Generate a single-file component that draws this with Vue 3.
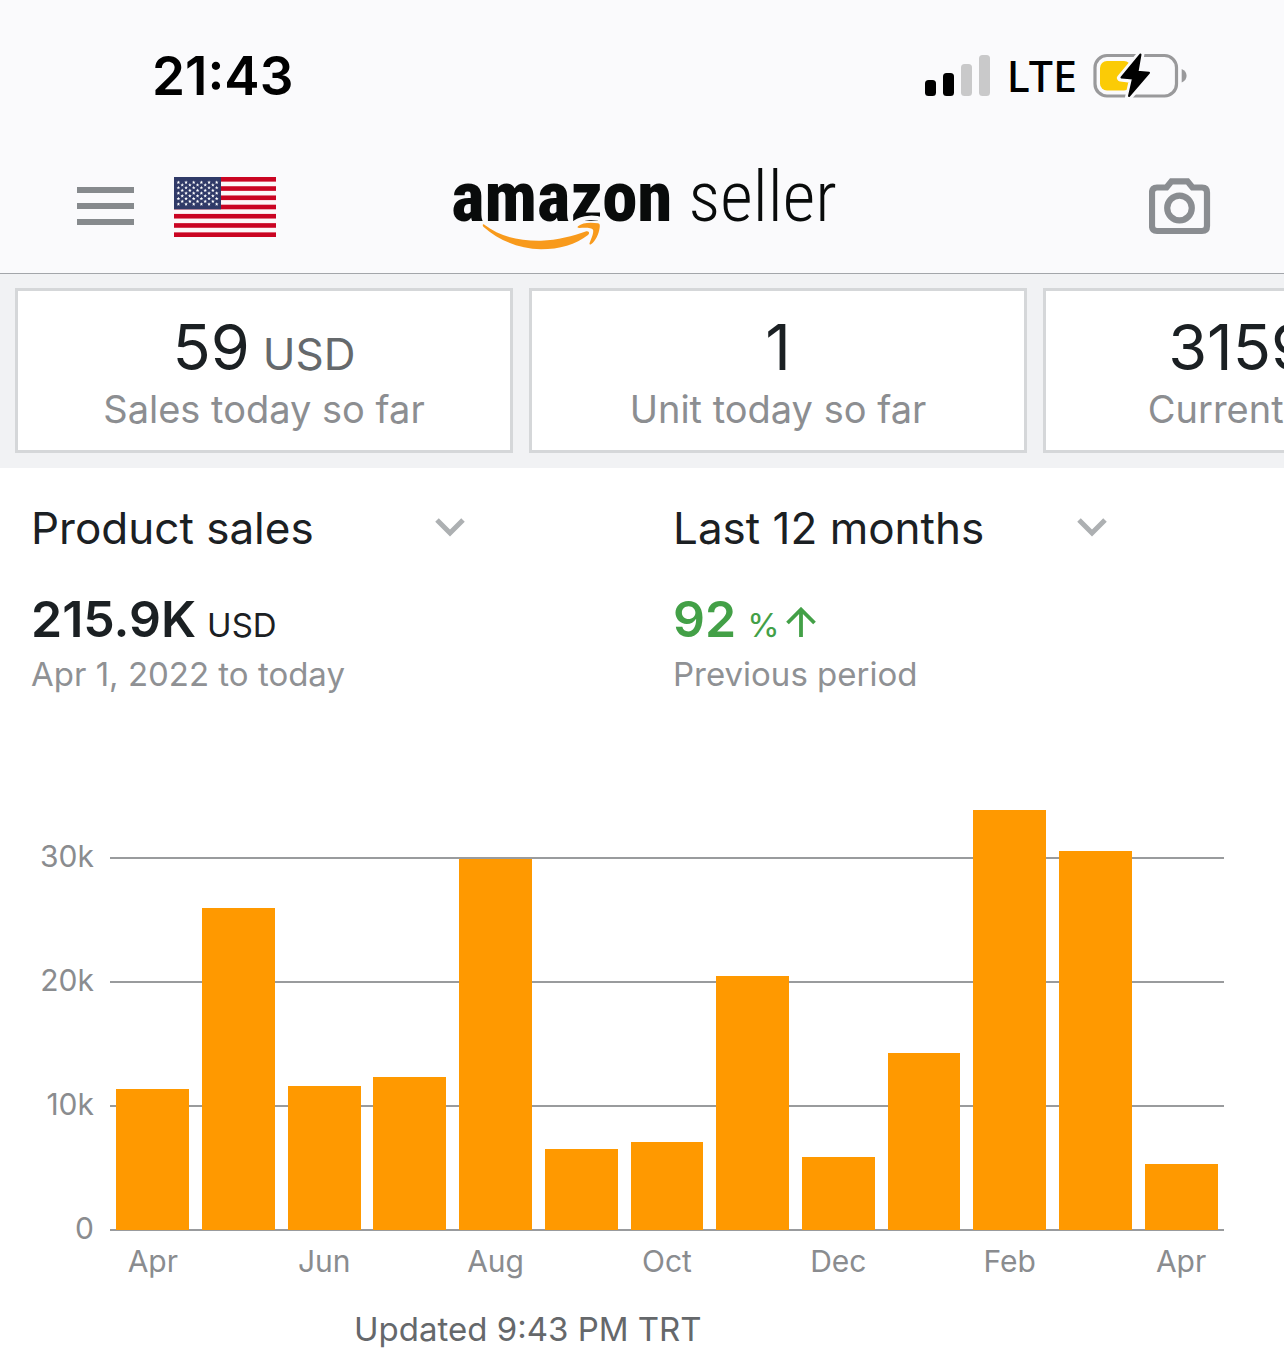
<script setup>
import { ref } from 'vue'

const metric = ref('Product sales')
const period = ref('Last 12 months')

const cards = [
  { value: '59', unit: 'USD', label: 'Sales today so far' },
  { value: '1', unit: '', label: 'Unit today so far' },
  { value: '3159', unit: 'USD', label: 'Current balance' },
]

const axisMax = 40000
const ticks = ['30k', '20k', '10k', '0']
const months = [
  { name: 'Apr', sales: 11400 },
  { name: 'May', sales: 26000 },
  { name: 'Jun', sales: 11620 },
  { name: 'Jul', sales: 12340 },
  { name: 'Aug', sales: 29960 },
  { name: 'Sep', sales: 6540 },
  { name: 'Oct', sales: 7120 },
  { name: 'Nov', sales: 20540 },
  { name: 'Dec', sales: 5900 },
  { name: 'Jan', sales: 14280 },
  { name: 'Feb', sales: 33950 },
  { name: 'Mar', sales: 30650 },
  { name: 'Apr', sales: 5330 },
]

// Fifty stars: nine rows alternating six and five across the canton.
const stars = []
for (let row = 0; row < 9; row++) {
  for (let col = row % 2; col < 11; col += 2) {
    stars.push({ x: 4.4 + col * 3.83, y: 5.3 + row * 2.72 })
  }
}
</script>

<template>
  <div class="app">
    <div class="status">
      <time class="clock">21:43</time>
      <div class="indicators">
        <svg width="66" height="42" viewBox="0 0 66 42" aria-hidden="true">
          <rect x="0" y="25" width="11" height="16" rx="3.5" />
          <rect x="18" y="18" width="11" height="23" rx="3.5" />
          <rect x="36" y="9" width="11" height="32" rx="3.5" fill="#c9c9ca" />
          <rect x="54" y="0" width="11" height="41" rx="3.5" fill="#c9c9ca" />
        </svg>
        <span class="network">LTE</span>
        <svg width="94" height="48" viewBox="0 0 94 48" aria-hidden="true">
          <rect x="2" y="3.500" width="81.500" height="40.500" rx="12" fill="none" stroke="#99999b" stroke-width="3.200" />
          <path d="M88.700 17c6.500 2.500 6.500 11 0 13.500z" fill="#99999b" />
          <rect x="7" y="9" width="31" height="29.500" rx="7" fill="#fbcb06" />
          <path d="M48 1.500 27.500 26 39.500 27.500 35.500 45.500 57 20.500 45 19z" fill="#fafafc" stroke="#fafafc" stroke-width="7" stroke-linejoin="round" />
          <path d="M47.500 2.500 28.500 25.500 40 26.500 36 44 56 20.800 44.500 19.800z" stroke="#000" stroke-width="2" stroke-linejoin="round" />
        </svg>
      </div>
    </div>

    <header class="header">
      <div class="left">
        <button class="icon-button" aria-label="Menu">
          <svg width="57" height="40" viewBox="0 0 57 40" fill="#868a8d">
            <rect y="0" width="57" height="6" />
            <rect y="16" width="57" height="6" />
            <rect y="32" width="57" height="6" />
          </svg>
        </button>
        <button class="icon-button" aria-label="United States marketplace">
          <svg width="102" height="60" viewBox="0 0 102 60">
            <rect width="102" height="60" fill="#fdf7f8" />
            <rect v-for="n in 7" :key="n" :y="(n - 1) * 9.23" width="102" height="4.62" fill="#ca0422" />
            <rect width="47" height="32.300" fill="#303a68" />
            <path
              v-for="(s, i) in stars"
              :key="i"
              :transform="`translate(${s.x} ${s.y})`"
              d="M0-1.900.500-.600 1.800-.550.800.300 1.100 1.600 0 .850-1.100 1.600-.800.300-1.800-.550-.500-.600z"
              fill="#fff"
            />
          </svg>
        </button>
      </div>
      <div class="logo">
        <span class="amazon">amazon</span>
        <span class="seller">seller</span>
        <svg class="smile" width="122" height="38" viewBox="120 177 366 114" aria-hidden="true">
          <path d="M402 203C425 186 465 184 492 198" fill="none" stroke="#fafafc" stroke-width="14" />
          <path d="M128 208C180 248 240 258 300 257 350 256 395 243 436 229 444 227 447 235 441 240 405 268 355 283 300 283 235 282 175 257 127 215 124 211 125 207 128 208z" fill="#f89a1c" />
          <path d="M411 214C424 202 450 201 471 205 477 206 477 212 476 218 473 238 464 257 450 268 447 270 444 267 446 263 452 249 459 231 456 224 452 217 430 218 415 219 410 219 408 217 411 214z" fill="#f89a1c" />
        </svg>
      </div>
      <button class="icon-button camera" aria-label="Camera">
        <svg width="62" height="57" viewBox="0 0 62 57" fill="none" stroke="#8a8d91" stroke-width="6.200">
          <path d="M8 9.500H17.500L22.500 3.300H38.500L43.500 9.500H53Q58 9.500 58 14.500V48Q58 53 53 53H8Q3 53 3 48V14.500Q3 9.500 8 9.500z" />
          <circle cx="30.500" cy="30" r="12.300" />
        </svg>
      </button>
    </header>

    <section class="cards">
      <article v-for="card in cards" :key="card.label" class="card">
        <p class="card-value">{{ card.value }}<span v-if="card.unit" class="card-unit">{{ card.unit }}</span></p>
        <p class="card-label">{{ card.label }}</p>
      </article>
    </section>

    <main class="report">
      <div class="summary">
        <div class="column">
          <div class="picker">
            <select v-model="metric" aria-label="Metric">
              <option>Product sales</option>
              <option>Units ordered</option>
            </select>
            <svg class="chevron" width="30" height="20" viewBox="0 0 30 20" aria-hidden="true">
              <path d="M2 3 15 16 28 3" fill="none" stroke="#adb0b2" stroke-width="5" />
            </svg>
          </div>
          <p class="total">215.9K<span class="total-unit">USD</span></p>
          <p class="note">Apr 1, 2022 to today</p>
        </div>
        <div class="column">
          <div class="picker">
            <select v-model="period" aria-label="Period">
              <option>Last 12 months</option>
              <option>Last 30 days</option>
            </select>
            <svg class="chevron" width="30" height="20" viewBox="0 0 30 20" aria-hidden="true">
              <path d="M2 3 15 16 28 3" fill="none" stroke="#adb0b2" stroke-width="5" />
            </svg>
          </div>
          <p class="total up">92<span class="total-unit">%</span><svg class="arrow" width="30" height="30" viewBox="0 0 30 30" aria-label="up">
              <path d="M15 30V3M1.500 16 15 2.500 28.500 16" fill="none" stroke="#43a047" stroke-width="3.800" />
            </svg>
          </p>
          <p class="note">Previous period</p>
        </div>
      </div>

      <div class="chart">
        <div class="y-axis">
          <span v-for="t in ticks" :key="t">{{ t }}</span>
        </div>
        <div class="plot">
          <div class="grid">
            <i v-for="t in ticks" :key="t"></i>
          </div>
          <div class="bars">
            <div v-for="(m, i) in months" :key="i" class="slot">
              <div class="bar" :style="{ height: (m.sales / axisMax) * 100 + '%' }"></div>
            </div>
          </div>
        </div>
        <div class="x-axis">
          <span v-for="(m, i) in months" :key="i">{{ i % 2 ? '' : m.name }}</span>
        </div>
      </div>

      <p class="updated">Updated 9:43 PM TRT</p>
    </main>
  </div>
</template>

<style>
body {
  margin: 0;
  background: #fff;
}
</style>

<style scoped>
.app {
  font-family: Inter, "Liberation Sans", sans-serif;
  color: #1b2023;
  background: #fff;
  overflow: hidden;
}
p {
  margin: 0;
}
.status {
  box-sizing: border-box;
  display: flex;
  justify-content: space-between;
  align-items: center;
  height: 140px;
  padding: 12px 97px 0 152px;
  background: #fafafc;
  color: #000;
}
.clock {
  font-size: 53px;
  font-weight: 600;
}
.indicators {
  display: flex;
  align-items: center;
  gap: 16px;
}
.network {
  font-family: "Noto Sans", sans-serif;
  font-size: 43px;
  font-weight: 500;
  line-height: 48px;
}
.header {
  display: grid;
  grid-template-columns: 1fr auto 1fr;
  align-items: center;
  height: 133px;
  padding: 0 73px 0 77px;
  background: #fafafc;
  border-bottom: 1px solid #a3a6aa;
}
.left {
  display: flex;
  align-items: center;
  gap: 40px;
}
.icon-button {
  display: block;
  padding: 0;
  border: 0;
  background: none;
}
.icon-button svg {
  display: block;
}
.camera {
  justify-self: end;
}
.logo {
  position: relative;
  display: flex;
  align-items: baseline;
  gap: 16px;
  height: 80px;
  margin-bottom: 20px;
  font-family: "Roboto Condensed", Roboto, sans-serif;
  font-size: 71px;
  line-height: 80px;
  color: #090b0b;
}
.amazon {
  font-weight: 800;
}
.seller {
  font-weight: 300;
}
.smile {
  position: absolute;
  left: 30px;
  top: 57px;
}
.cards {
  display: flex;
  gap: 16px;
  padding: 14px 15px 15px;
  background: #f1f2f4;
}
.card {
  box-sizing: border-box;
  flex: 0 0 498px;
  height: 165px;
  padding-top: 18px;
  border: 3px solid #d5d7d9;
  background: #fff;
  text-align: center;
}
.card-value {
  font-size: 63px;
  line-height: 77px;
}
.card-unit {
  margin-left: 13px;
  font-size: 44px;
  line-height: 44px;
  color: #65696c;
}
.card-label {
  font-size: 38px;
  line-height: 46px;
  color: #8c8e91;
}
.report {
  padding: 32px 0 20px 31px;
}
.summary {
  display: flex;
  margin-left: -31px;
}
.column {
  flex: 1;
  padding-left: 31px;
}
.picker {
  position: relative;
  width: 436px;
}
.picker select {
  display: block;
  width: 100%;
  height: 56px;
  padding: 0;
  border: 0;
  background: none;
  appearance: none;
  font: inherit;
  font-size: 44px;
  color: inherit;
}
.chevron {
  position: absolute;
  right: 2px;
  top: 17px;
}
.total {
  margin-top: 32px;
  font-size: 50px;
  font-weight: 600;
  line-height: 62px;
}
.total-unit {
  margin-left: 11px;
  font-size: 33px;
  font-weight: 400;
  line-height: 33px;
}
.arrow {
  margin-left: 6px;
}
.up {
  color: #43a047;
}
.note {
  margin-top: 4px;
  font-size: 33px;
  line-height: 40px;
  color: #8f9194;
}
.chart {
  display: grid;
  grid-template-columns: 63px 1fr;
  column-gap: 16px;
  margin: 41px 60px 0 0;
  font-size: 30px;
  color: #8a8c8f;
}
.y-axis {
  display: flex;
  flex-direction: column;
  margin: 15px 0 -15px;
}
.y-axis span {
  display: flex;
  flex: 1;
  align-items: flex-end;
  justify-content: flex-end;
  line-height: 36px;
}
.plot {
  display: grid;
  height: 496px;
}
.grid,
.bars {
  grid-area: 1 / 1;
  display: flex;
}
.grid {
  flex-direction: column;
}
.grid i {
  flex: 1;
  border-bottom: 2px solid #999b9d;
}
.bars {
  align-items: stretch;
  margin-bottom: 1px;
}
.slot {
  display: flex;
  flex: 1;
  align-items: flex-end;
  justify-content: center;
}
.bar {
  width: 85%;
  background: #ff9900;
}
.x-axis {
  grid-column: 2;
  display: flex;
  margin-top: 12px;
  line-height: 36px;
}
.x-axis span {
  flex: 1;
  text-align: center;
}
.updated {
  margin: 30px 0 0 323px;
  font-size: 33px;
  line-height: 40px;
  color: #65686b;
}
</style>
